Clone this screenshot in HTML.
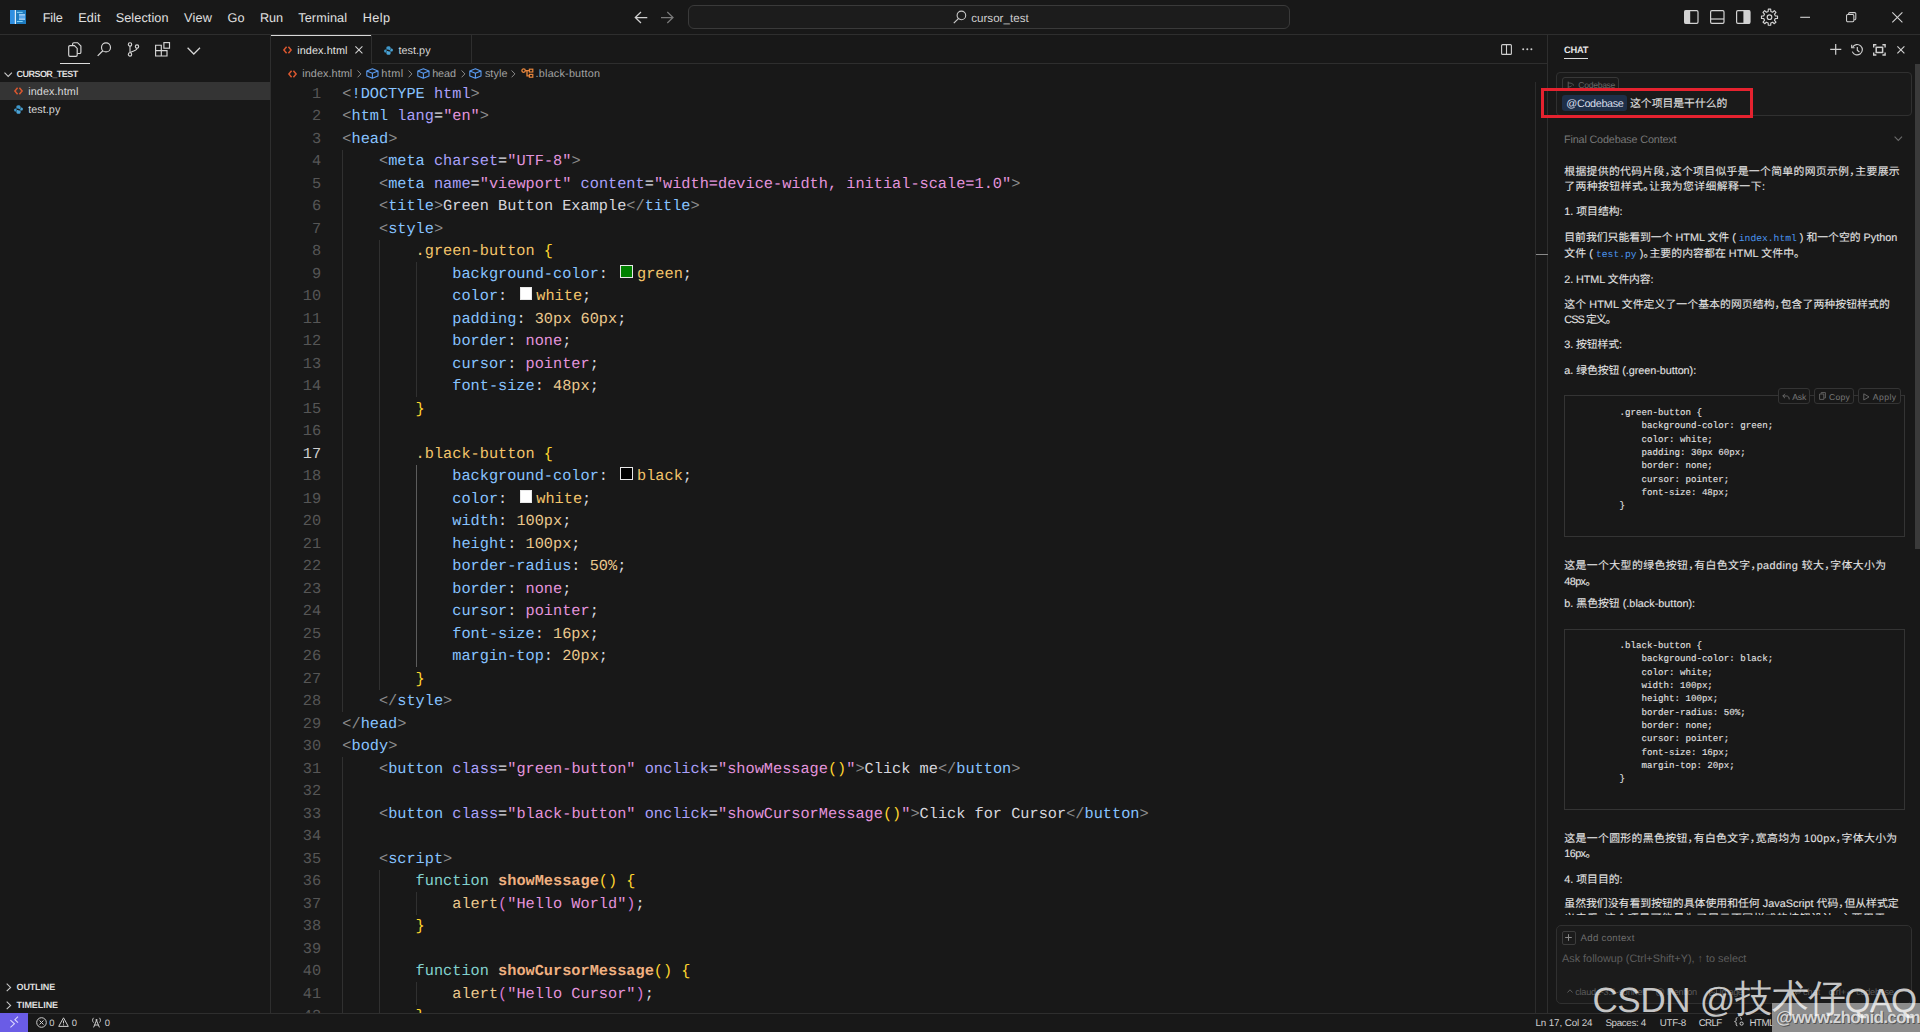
<!DOCTYPE html>
<html lang="en">
<head>
<meta charset="UTF-8">
<title>cursor_test</title>
<style>
*{box-sizing:border-box;margin:0;padding:0}
html,body{width:1920px;height:1032px;overflow:hidden;background:#181818}
body{position:relative;font-family:"Liberation Sans",sans-serif;color:#ccc;font-size:13px;text-rendering:geometricPrecision}
.tx{position:absolute;white-space:nowrap;display:block}
.bx{position:absolute}
svg{display:block;position:absolute;overflow:visible}
#code{position:absolute;left:0;top:0;width:1535px;height:1013px;overflow:hidden;font-family:"Liberation Mono",monospace;font-size:15.272px;line-height:22px;white-space:pre;color:#d6d6dd}
#code .ln{position:absolute;left:271px;width:50.2px;text-align:right;height:22px}
#code .cl{position:absolute;left:342.3px;height:22px}
#code b{font-weight:bold}
.sw{display:inline-block;width:12.8px;height:12.4px;margin:0 3.8px 0 3.3px;border:1px solid #e8e8e8;vertical-align:0.2px;box-sizing:border-box}
.cb{position:absolute;left:1575.5px;font-family:"Liberation Mono",monospace;font-size:9.17px;line-height:13.33px;height:13.33px;white-space:pre;color:#e2e2e2;-webkit-text-stroke:0.1px #e2e2e2}
.ic{font-family:"Liberation Mono",monospace;font-size:9.68px;color:#4a94ee;letter-spacing:0;-webkit-text-stroke:0}
.clip{position:absolute;overflow:hidden}
.pn{display:inline-block;width:0.56em;font-style:normal;overflow:visible}
</style>
</head>
<body>
<div class="bx" style="left:0px;top:34px;width:1920px;height:1px;background:#2e2e2e;"></div>
<div class="bx" style="left:270px;top:35px;width:1px;height:978px;background:#2e2e2e;"></div>
<div class="bx" style="left:1547px;top:35px;width:1px;height:978px;background:#2e2e2e;"></div>
<div class="bx" style="left:0px;top:1013px;width:1920px;height:1px;background:#2e2e2e;"></div>
<div class="bx" style="left:371px;top:63px;width:1177px;height:1px;background:#2e2e2e;"></div>
<svg style="left:10px;top:10px;" width="16" height="14" viewBox="0 0 16 14"><rect x="0" y="0" width="16" height="14" fill="#1f7cc0"/><rect x="0" y="0" width="4.8" height="14" fill="#2f8fe2"/><rect x="4.8" y="0" width="1.1" height="14" fill="#f4f8fc"/><rect x="6.9" y="1.9" width="5.8" height="0.9" fill="#8fdcff"/><rect x="9" y="4.4" width="6" height="5.2" fill="#5aa6ea"/><rect x="9" y="4.4" width="6" height="0.9" fill="#d6ecff"/><rect x="9" y="8.7" width="6" height="0.9" fill="#d6ecff"/><rect x="6.9" y="11" width="5.8" height="0.9" fill="#8fdcff"/></svg>
<span class="tx" id="f0" style="left:42.70px;top:9px;font-size:12.7px;line-height:18px;height:18px;color:#e0e0e0;letter-spacing:-0.088px;">File</span>
<span class="tx" id="f1" style="left:78.20px;top:9px;font-size:12.7px;line-height:18px;height:18px;color:#e0e0e0;letter-spacing:0.156px;">Edit</span>
<span class="tx" id="f2" style="left:115.70px;top:9px;font-size:12.7px;line-height:18px;height:18px;color:#e0e0e0;letter-spacing:0.077px;">Selection</span>
<span class="tx" id="f3" style="left:184.10px;top:9px;font-size:12.7px;line-height:18px;height:18px;color:#e0e0e0;letter-spacing:0.205px;">View</span>
<span class="tx" id="f4" style="left:227.50px;top:9px;font-size:12.7px;line-height:18px;height:18px;color:#e0e0e0;letter-spacing:0.031px;">Go</span>
<span class="tx" id="f5" style="left:259.90px;top:9px;font-size:12.7px;line-height:18px;height:18px;color:#e0e0e0;letter-spacing:-0.094px;">Run</span>
<span class="tx" id="f6" style="left:298.20px;top:9px;font-size:12.7px;line-height:18px;height:18px;color:#e0e0e0;letter-spacing:0.143px;">Terminal</span>
<span class="tx" id="f7" style="left:362.70px;top:9px;font-size:12.7px;line-height:18px;height:18px;color:#e0e0e0;letter-spacing:0.452px;">Help</span>
<svg style="left:634px;top:11px;" width="14" height="13" viewBox="0 0 14 13"><path d="M7 1 L1.3 6.5 L7 12 M1.3 6.5 H13.3" fill="none" stroke="#d0d0d0" stroke-width="1.25"/></svg>
<svg style="left:660px;top:11px;" width="14" height="13" viewBox="0 0 14 13"><path d="M7.3 1 L13 6.5 L7.3 12 M13 6.5 H1" fill="none" stroke="#7a7a7a" stroke-width="1.25"/></svg>
<div class="bx" style="left:688px;top:5px;width:602px;height:24px;background:#1c1c1c;border:1px solid #3a3a3a;border-radius:6px;"></div>
<svg style="left:953px;top:10px;" width="14" height="14" viewBox="0 0 14 14"><circle cx="8.4" cy="5.4" r="4.3" fill="none" stroke="#c8c8c8" stroke-width="1.1"/><path d="M5.4 8.6 L0.8 13.2" stroke="#c8c8c8" stroke-width="1.2"/></svg>
<span class="tx" id="f8" style="left:971.20px;top:10px;font-size:11.6px;line-height:17px;height:17px;color:#cfcfcf;letter-spacing:0.013px;">cursor_test</span>
<svg style="left:1684px;top:10px;" width="15" height="14" viewBox="0 0 15 14"><rect x="0.6" y="0.6" width="13.4" height="12.8" rx="1.3" fill="none" stroke="#d2d2d2" stroke-width="1.2"/><rect x="0.6" y="0.6" width="5.6" height="12.8" fill="#d2d2d2"/></svg>
<svg style="left:1710px;top:10px;" width="15" height="14" viewBox="0 0 15 14"><rect x="0.6" y="0.6" width="13.4" height="12.8" rx="1.3" fill="none" stroke="#d2d2d2" stroke-width="1.2"/><path d="M0.6 9 H14" stroke="#d2d2d2" stroke-width="1.2"/></svg>
<svg style="left:1736px;top:10px;" width="15" height="14" viewBox="0 0 15 14"><rect x="0.6" y="0.6" width="13.4" height="12.8" rx="1.3" fill="none" stroke="#d2d2d2" stroke-width="1.2"/><rect x="7.4" y="0.6" width="6.6" height="12.8" fill="#d2d2d2"/></svg>
<svg style="left:1760.5px;top:8.8px;" width="17" height="17" viewBox="0 0 17 17"><g transform="translate(8.5,8.2)"><polygon points="-1.33,-5.75 -1.20,-8.01 1.20,-8.01 1.33,-5.75 3.13,-5.00 4.82,-6.51 6.51,-4.82 5.00,-3.13 5.75,-1.33 8.01,-1.20 8.01,1.20 5.75,1.33 5.00,3.13 6.51,4.82 4.82,6.51 3.13,5.00 1.33,5.75 1.20,8.01 -1.20,8.01 -1.33,5.75 -3.13,5.00 -4.82,6.51 -6.51,4.82 -5.00,3.13 -5.75,1.33 -8.01,1.20 -8.01,-1.20 -5.75,-1.33 -5.00,-3.13 -6.51,-4.82 -4.82,-6.51 -3.13,-5.00" fill="none" stroke="#d2d2d2" stroke-width="1.15" stroke-linejoin="round"/><circle r="2.3" fill="none" stroke="#d2d2d2" stroke-width="1.15"/></g></svg>
<svg style="left:1800px;top:12px;" width="11" height="11" viewBox="0 0 11 11"><path d="M0.2 5.3 H10" stroke="#d2d2d2" stroke-width="1.1"/></svg>
<svg style="left:1845.8px;top:11.9px;" width="11" height="11" viewBox="0 0 11 11"><rect x="0.55" y="2.5" width="7.3" height="7.3" rx="1.2" fill="none" stroke="#d2d2d2" stroke-width="1.05"/><path d="M2.6 2.3 V1.8 A1.2 1.2 0 0 1 3.8 0.6 H8.6 A1.2 1.2 0 0 1 9.8 1.8 V6.6 A1.2 1.2 0 0 1 8.6 7.8 H8.1" fill="none" stroke="#d2d2d2" stroke-width="1.05"/></svg>
<svg style="left:1891.8px;top:11.9px;" width="11" height="11" viewBox="0 0 11 11"><path d="M0.3 0.3 L10.4 10.4 M10.4 0.3 L0.3 10.4" stroke="#d2d2d2" stroke-width="1.1"/></svg>
<svg style="left:68px;top:41.5px;" width="14" height="15" viewBox="0 0 14 15"><path d="M4.6 3.4 V2 A1.3 1.3 0 0 1 5.9 0.7 H9.6 L12.9 4 V10.2 A1.3 1.3 0 0 1 11.6 11.5 H9.2" fill="none" stroke="#d6d6d6" stroke-width="1.15"/><path d="M2 3.6 H6.4 L9.2 6.4 V13 A1.3 1.3 0 0 1 7.9 14.3 H2 A1.3 1.3 0 0 1 0.7 13 V4.9 A1.3 1.3 0 0 1 2 3.6 Z" fill="none" stroke="#d6d6d6" stroke-width="1.15"/></svg>
<div class="bx" style="left:60px;top:62.5px;width:30px;height:1.4px;background:#dcdcdc;"></div>
<svg style="left:97px;top:42px;" width="15" height="15" viewBox="0 0 15 15"><circle cx="9" cy="5.4" r="4.5" fill="none" stroke="#d6d6d6" stroke-width="1.15"/><path d="M5.8 8.8 L0.7 13.9" stroke="#d6d6d6" stroke-width="1.25"/></svg>
<svg style="left:127px;top:41.5px;" width="13" height="15" viewBox="0 0 13 15"><circle cx="3" cy="2.4" r="1.7" fill="none" stroke="#d6d6d6" stroke-width="1.1"/><circle cx="3" cy="12.4" r="1.7" fill="none" stroke="#d6d6d6" stroke-width="1.1"/><circle cx="10" cy="4.6" r="1.7" fill="none" stroke="#d6d6d6" stroke-width="1.1"/><path d="M3 4.1 V10.7 M10 6.3 C10 9 6 8.6 3.6 10.4" fill="none" stroke="#d6d6d6" stroke-width="1.1"/></svg>
<svg style="left:154.9px;top:41.8px;" width="16" height="15" viewBox="0 0 16 15"><path d="M0.6 3.2 H6.3 V8.6 H12 V14 H0.6 Z M0.6 8.6 H6.3 V14" fill="none" stroke="#d6d6d6" stroke-width="1.15"/><rect x="8.9" y="0.6" width="5.6" height="5.6" fill="none" stroke="#d6d6d6" stroke-width="1.15"/></svg>
<svg style="left:187px;top:46.5px;" width="14" height="8" viewBox="0 0 14 8"><path d="M0.6 0.8 L6.8 7 L13 0.8" fill="none" stroke="#d6d6d6" stroke-width="1.25"/></svg>
<svg style="left:4px;top:71.5px;" width="9" height="6" viewBox="0 0 9 6"><path d="M0.5 0.6 L4.2 4.4 L7.9 0.6" fill="none" stroke="#c8c8c8" stroke-width="1.1"/></svg>
<span class="tx" id="f9" style="left:16.60px;top:67px;font-size:9.0px;line-height:14px;height:14px;color:#dedede;font-weight:bold;letter-spacing:-0.547px;">CURSOR_TEST</span>
<div class="bx" style="left:0px;top:82px;width:270px;height:18px;background:#343434;"></div>
<svg style="left:14px;top:87.2px;" width="9" height="8" viewBox="0 0 9 8"><path d="M3.6 0.8 L0.9 4 L3.6 7.2 M5.4 0.8 L8.1 4 L5.4 7.2" fill="none" stroke="#d9572f" stroke-width="1.5"/></svg>
<span class="tx" id="f10" style="left:28.20px;top:84px;font-size:10.83px;line-height:16px;height:16px;color:#d8d8d8;letter-spacing:0.084px;">index.html</span>
<svg style="left:13.8px;top:104.6px;" width="9" height="9" viewBox="0 0 9 9"><path d="M4.4 0.2 C2.6 0.2 2.4 1 2.4 1.8 V2.9 H4.6 V3.4 H1.4 C0.4 3.4 0.1 4.4 0.1 5 C0.1 5.8 0.5 6.6 1.4 6.6 H2.3 V5.4 C2.3 4.6 3 4.1 3.7 4.1 H5.6 C6.2 4.1 6.6 3.6 6.6 3 V1.8 C6.6 0.8 5.8 0.2 4.4 0.2 Z" fill="#3f97c9"/><path d="M4.6 8.8 C6.4 8.8 6.6 8 6.6 7.2 V6.1 H4.4 V5.6 H7.6 C8.6 5.6 8.9 4.6 8.9 4 C8.9 3.2 8.5 2.4 7.6 2.4 H6.7 V3.6 C6.7 4.4 6 4.9 5.3 4.9 H3.4 C2.8 4.9 2.4 5.4 2.4 6 V7.2 C2.4 8.2 3.2 8.8 4.6 8.8 Z" fill="#4aa3d6"/></svg>
<span class="tx" id="f11" style="left:28.20px;top:102px;font-size:10.83px;line-height:16px;height:16px;color:#d8d8d8;letter-spacing:0.042px;">test.py</span>
<svg style="left:6px;top:982.6px;" width="6" height="9" viewBox="0 0 6 9"><path d="M0.7 0.6 L4.6 4.4 L0.7 8.2" fill="none" stroke="#c8c8c8" stroke-width="1.1"/></svg>
<span class="tx" id="f12" style="left:16.60px;top:980px;font-size:9.0px;line-height:14px;height:14px;color:#dedede;font-weight:bold;letter-spacing:-0.157px;">OUTLINE</span>
<svg style="left:6px;top:1000.6px;" width="6" height="9" viewBox="0 0 6 9"><path d="M0.7 0.6 L4.6 4.4 L0.7 8.2" fill="none" stroke="#c8c8c8" stroke-width="1.1"/></svg>
<span class="tx" id="f13" style="left:16.60px;top:998px;font-size:9.0px;line-height:14px;height:14px;color:#dedede;font-weight:bold;letter-spacing:-0.075px;">TIMELINE</span>
<div class="bx" style="left:271px;top:35px;width:100px;height:1px;background:#d8d8d8;"></div>
<div class="bx" style="left:371px;top:35px;width:1px;height:28px;background:#2e2e2e;"></div>
<div class="bx" style="left:471px;top:35px;width:1px;height:28px;background:#2e2e2e;"></div>
<svg style="left:283px;top:46.4px;" width="9" height="8" viewBox="0 0 9 8"><path d="M3.6 0.8 L0.9 4 L3.6 7.2 M5.4 0.8 L8.1 4 L5.4 7.2" fill="none" stroke="#d9572f" stroke-width="1.5"/></svg>
<span class="tx" id="f14" style="left:297.20px;top:43px;font-size:10.83px;line-height:16px;height:16px;color:#e2e2e2;letter-spacing:0.104px;">index.html</span>
<svg style="left:354.9px;top:46.2px;" width="8" height="8" viewBox="0 0 8 8"><path d="M0.4 0.4 L7.4 7.4 M7.4 0.4 L0.4 7.4" stroke="#d4d4d4" stroke-width="1.05"/></svg>
<svg style="left:384px;top:45.6px;" width="9" height="9" viewBox="0 0 9 9"><path d="M4.4 0.2 C2.6 0.2 2.4 1 2.4 1.8 V2.9 H4.6 V3.4 H1.4 C0.4 3.4 0.1 4.4 0.1 5 C0.1 5.8 0.5 6.6 1.4 6.6 H2.3 V5.4 C2.3 4.6 3 4.1 3.7 4.1 H5.6 C6.2 4.1 6.6 3.6 6.6 3 V1.8 C6.6 0.8 5.8 0.2 4.4 0.2 Z" fill="#3f97c9"/><path d="M4.6 8.8 C6.4 8.8 6.6 8 6.6 7.2 V6.1 H4.4 V5.6 H7.6 C8.6 5.6 8.9 4.6 8.9 4 C8.9 3.2 8.5 2.4 7.6 2.4 H6.7 V3.6 C6.7 4.4 6 4.9 5.3 4.9 H3.4 C2.8 4.9 2.4 5.4 2.4 6 V7.2 C2.4 8.2 3.2 8.8 4.6 8.8 Z" fill="#4aa3d6"/></svg>
<span class="tx" id="f15" style="left:398.40px;top:43px;font-size:10.83px;line-height:16px;height:16px;color:#d8d8d8;letter-spacing:0.042px;">test.py</span>
<svg style="left:1501px;top:43.6px;" width="11" height="11" viewBox="0 0 11 11"><rect x="0.6" y="0.6" width="9.8" height="9.8" rx="1" fill="none" stroke="#cfcfcf" stroke-width="1.1"/><path d="M5.5 0.6 V10.4" stroke="#cfcfcf" stroke-width="1.1"/></svg>
<svg style="left:1522.4px;top:48px;" width="11" height="3" viewBox="0 0 11 3"><circle cx="1.2" cy="1.2" r="1" fill="#cfcfcf"/><circle cx="5.3" cy="1.2" r="1" fill="#cfcfcf"/><circle cx="9.4" cy="1.2" r="1" fill="#cfcfcf"/></svg>
<svg style="left:288px;top:69.7px;" width="9" height="8" viewBox="0 0 9 8"><path d="M3.6 0.8 L0.9 4 L3.6 7.2 M5.4 0.8 L8.1 4 L5.4 7.2" fill="none" stroke="#d9572f" stroke-width="1.5"/></svg>
<span class="tx" id="f16" style="left:302.30px;top:66px;font-size:10.83px;line-height:16px;height:16px;color:#a2a2a2;letter-spacing:0.064px;">index.html</span>
<svg style="left:357.3px;top:70.1px;" width="5" height="8" viewBox="0 0 5 8"><path d="M0.6 0.5 L3.9 3.9 L0.6 7.3" fill="none" stroke="#8a8a8a" stroke-width="1"/></svg>
<svg style="left:365.5px;top:68.1px;" width="13" height="11" viewBox="0 0 13 11"><path d="M6.4 0.7 L12 2.9 V7.9 L6.4 10.3 L0.8 7.9 V2.9 Z M0.8 2.9 L6.4 5.2 L12 2.9 M6.4 5.2 V10.3" fill="none" stroke="#5a9bf0" stroke-width="1.1" stroke-linejoin="round"/></svg>
<span class="tx" id="f17" style="left:381.30px;top:66px;font-size:10.83px;line-height:16px;height:16px;color:#a2a2a2;letter-spacing:0.433px;">html</span>
<svg style="left:407.8px;top:70.1px;" width="5" height="8" viewBox="0 0 5 8"><path d="M0.6 0.5 L3.9 3.9 L0.6 7.3" fill="none" stroke="#8a8a8a" stroke-width="1"/></svg>
<svg style="left:416.6px;top:68.1px;" width="13" height="11" viewBox="0 0 13 11"><path d="M6.4 0.7 L12 2.9 V7.9 L6.4 10.3 L0.8 7.9 V2.9 Z M0.8 2.9 L6.4 5.2 L12 2.9 M6.4 5.2 V10.3" fill="none" stroke="#5a9bf0" stroke-width="1.1" stroke-linejoin="round"/></svg>
<span class="tx" id="f18" style="left:432.20px;top:66px;font-size:10.83px;line-height:16px;height:16px;color:#a2a2a2;letter-spacing:-0.123px;">head</span>
<svg style="left:460.8px;top:70.1px;" width="5" height="8" viewBox="0 0 5 8"><path d="M0.6 0.5 L3.9 3.9 L0.6 7.3" fill="none" stroke="#8a8a8a" stroke-width="1"/></svg>
<svg style="left:469.2px;top:68.1px;" width="13" height="11" viewBox="0 0 13 11"><path d="M6.4 0.7 L12 2.9 V7.9 L6.4 10.3 L0.8 7.9 V2.9 Z M0.8 2.9 L6.4 5.2 L12 2.9 M6.4 5.2 V10.3" fill="none" stroke="#5a9bf0" stroke-width="1.1" stroke-linejoin="round"/></svg>
<span class="tx" id="f19" style="left:484.90px;top:66px;font-size:10.83px;line-height:16px;height:16px;color:#a2a2a2;letter-spacing:0.067px;">style</span>
<svg style="left:511.4px;top:70.1px;" width="5" height="8" viewBox="0 0 5 8"><path d="M0.6 0.5 L3.9 3.9 L0.6 7.3" fill="none" stroke="#8a8a8a" stroke-width="1"/></svg>
<svg style="left:521px;top:68.1px;" width="13" height="11" viewBox="0 0 13 11"><circle cx="2.6" cy="2.6" r="1.7" fill="none" stroke="#e8863c" stroke-width="1.3"/><path d="M4.2 2.6 H8 M6 2.6 V7.8 H8" fill="none" stroke="#e8863c" stroke-width="1.3"/><rect x="8.4" y="1.2" width="3.4" height="2.8" fill="none" stroke="#e8863c" stroke-width="1.2"/><rect x="8.4" y="6.4" width="3.4" height="2.8" fill="none" stroke="#e8863c" stroke-width="1.2"/></svg>
<span class="tx" id="f20" style="left:535.60px;top:66px;font-size:10.83px;line-height:16px;height:16px;color:#a2a2a2;letter-spacing:0.200px;">.black-button</span>
<div class="bx" style="left:1535px;top:82px;width:1px;height:931px;background:#2c2c2c;"></div>
<div class="bx" style="left:1536px;top:254px;width:12px;height:1.4px;background:#8a8a8a;"></div>
<div class="bx" style="left:342.3px;top:149.5px;width:1px;height:562.5px;background:#303030;"></div>
<div class="bx" style="left:379.0px;top:239.5px;width:1px;height:450.0px;background:#303030;"></div>
<div class="bx" style="left:415.6px;top:262.0px;width:1px;height:135.0px;background:#303030;"></div>
<div class="bx" style="left:415.6px;top:464.5px;width:1px;height:202.5px;background:#5c5c5c;"></div>
<div class="bx" style="left:342.3px;top:757.0px;width:1px;height:256.0px;background:#303030;"></div>
<div class="bx" style="left:379.0px;top:869.5px;width:1px;height:143.5px;background:#303030;"></div>
<div class="bx" style="left:415.6px;top:892.0px;width:1px;height:22.5px;background:#303030;"></div>
<div class="bx" style="left:415.6px;top:982.0px;width:1px;height:22.5px;background:#303030;"></div>
<div id="code"><div class="ln" style="top:83px;color:#565656">1</div>
<div class="cl" style="top:83px"><span style="color:#8c8c8c">&lt;</span><span style="color:#87c3ff">!DOCTYPE</span> <span style="color:#aaa0fa">html</span><span style="color:#8c8c8c">&gt;</span></div>
<div class="ln" style="top:105px;color:#565656">2</div>
<div class="cl" style="top:105px"><span style="color:#8c8c8c">&lt;</span><span style="color:#87c3ff">html</span> <span style="color:#aaa0fa">lang</span>=<span style="color:#e394dc">"en"</span><span style="color:#8c8c8c">&gt;</span></div>
<div class="ln" style="top:128px;color:#565656">3</div>
<div class="cl" style="top:128px"><span style="color:#8c8c8c">&lt;</span><span style="color:#87c3ff">head</span><span style="color:#8c8c8c">&gt;</span></div>
<div class="ln" style="top:150px;color:#565656">4</div>
<div class="cl" style="top:150px">    <span style="color:#8c8c8c">&lt;</span><span style="color:#87c3ff">meta</span> <span style="color:#aaa0fa">charset</span>=<span style="color:#e394dc">"UTF-8"</span><span style="color:#8c8c8c">&gt;</span></div>
<div class="ln" style="top:173px;color:#565656">5</div>
<div class="cl" style="top:173px">    <span style="color:#8c8c8c">&lt;</span><span style="color:#87c3ff">meta</span> <span style="color:#aaa0fa">name</span>=<span style="color:#e394dc">"viewport"</span> <span style="color:#aaa0fa">content</span>=<span style="color:#e394dc">"width=device-width, initial-scale=1.0"</span><span style="color:#8c8c8c">&gt;</span></div>
<div class="ln" style="top:195px;color:#565656">6</div>
<div class="cl" style="top:195px">    <span style="color:#8c8c8c">&lt;</span><span style="color:#87c3ff">title</span><span style="color:#8c8c8c">&gt;</span>Green Button Example<span style="color:#8c8c8c">&lt;/</span><span style="color:#87c3ff">title</span><span style="color:#8c8c8c">&gt;</span></div>
<div class="ln" style="top:218px;color:#565656">7</div>
<div class="cl" style="top:218px">    <span style="color:#8c8c8c">&lt;</span><span style="color:#87c3ff">style</span><span style="color:#8c8c8c">&gt;</span></div>
<div class="ln" style="top:240px;color:#565656">8</div>
<div class="cl" style="top:240px">        <span style="color:#f3c46a">.green-button</span> <span style="color:#ffd52e">{</span></div>
<div class="ln" style="top:263px;color:#565656">9</div>
<div class="cl" style="top:263px">            <span style="color:#87c3ff">background-color</span>: <i class="sw" style="background:#008000"></i><span style="color:#f3c46a">green</span>;</div>
<div class="ln" style="top:285px;color:#565656">10</div>
<div class="cl" style="top:285px">            <span style="color:#87c3ff">color</span>: <i class="sw" style="background:#ffffff"></i><span style="color:#f3c46a">white</span>;</div>
<div class="ln" style="top:308px;color:#565656">11</div>
<div class="cl" style="top:308px">            <span style="color:#87c3ff">padding</span>: <span style="color:#ebc88d">30px</span> <span style="color:#ebc88d">60px</span>;</div>
<div class="ln" style="top:330px;color:#565656">12</div>
<div class="cl" style="top:330px">            <span style="color:#87c3ff">border</span>: <span style="color:#e394dc">none</span>;</div>
<div class="ln" style="top:353px;color:#565656">13</div>
<div class="cl" style="top:353px">            <span style="color:#87c3ff">cursor</span>: <span style="color:#e394dc">pointer</span>;</div>
<div class="ln" style="top:375px;color:#565656">14</div>
<div class="cl" style="top:375px">            <span style="color:#87c3ff">font-size</span>: <span style="color:#ebc88d">48px</span>;</div>
<div class="ln" style="top:398px;color:#565656">15</div>
<div class="cl" style="top:398px">        <span style="color:#ffd52e">}</span></div>
<div class="ln" style="top:420px;color:#565656">16</div>
<div class="ln" style="top:443px;color:#cfcfcf">17</div>
<div class="cl" style="top:443px">        <span style="color:#f3c46a">.black-button</span> <span style="color:#ffd52e">{</span></div>
<div class="ln" style="top:465px;color:#565656">18</div>
<div class="cl" style="top:465px">            <span style="color:#87c3ff">background-color</span>: <i class="sw" style="background:#000000"></i><span style="color:#f3c46a">black</span>;</div>
<div class="ln" style="top:488px;color:#565656">19</div>
<div class="cl" style="top:488px">            <span style="color:#87c3ff">color</span>: <i class="sw" style="background:#ffffff"></i><span style="color:#f3c46a">white</span>;</div>
<div class="ln" style="top:510px;color:#565656">20</div>
<div class="cl" style="top:510px">            <span style="color:#87c3ff">width</span>: <span style="color:#ebc88d">100px</span>;</div>
<div class="ln" style="top:533px;color:#565656">21</div>
<div class="cl" style="top:533px">            <span style="color:#87c3ff">height</span>: <span style="color:#ebc88d">100px</span>;</div>
<div class="ln" style="top:555px;color:#565656">22</div>
<div class="cl" style="top:555px">            <span style="color:#87c3ff">border-radius</span>: <span style="color:#ebc88d">50%</span>;</div>
<div class="ln" style="top:578px;color:#565656">23</div>
<div class="cl" style="top:578px">            <span style="color:#87c3ff">border</span>: <span style="color:#e394dc">none</span>;</div>
<div class="ln" style="top:600px;color:#565656">24</div>
<div class="cl" style="top:600px">            <span style="color:#87c3ff">cursor</span>: <span style="color:#e394dc">pointer</span>;</div>
<div class="ln" style="top:623px;color:#565656">25</div>
<div class="cl" style="top:623px">            <span style="color:#87c3ff">font-size</span>: <span style="color:#ebc88d">16px</span>;</div>
<div class="ln" style="top:645px;color:#565656">26</div>
<div class="cl" style="top:645px">            <span style="color:#87c3ff">margin-top</span>: <span style="color:#ebc88d">20px</span>;</div>
<div class="ln" style="top:668px;color:#565656">27</div>
<div class="cl" style="top:668px">        <span style="color:#ffd52e">}</span></div>
<div class="ln" style="top:690px;color:#565656">28</div>
<div class="cl" style="top:690px">    <span style="color:#8c8c8c">&lt;/</span><span style="color:#87c3ff">style</span><span style="color:#8c8c8c">&gt;</span></div>
<div class="ln" style="top:713px;color:#565656">29</div>
<div class="cl" style="top:713px"><span style="color:#8c8c8c">&lt;/</span><span style="color:#87c3ff">head</span><span style="color:#8c8c8c">&gt;</span></div>
<div class="ln" style="top:735px;color:#565656">30</div>
<div class="cl" style="top:735px"><span style="color:#8c8c8c">&lt;</span><span style="color:#87c3ff">body</span><span style="color:#8c8c8c">&gt;</span></div>
<div class="ln" style="top:758px;color:#565656">31</div>
<div class="cl" style="top:758px">    <span style="color:#8c8c8c">&lt;</span><span style="color:#87c3ff">button</span> <span style="color:#aaa0fa">class</span>=<span style="color:#e394dc">"green-button"</span> <span style="color:#aaa0fa">onclick</span>=<span style="color:#e394dc">"showMessage</span><span style="color:#ffd52e">()</span><span style="color:#e394dc">"</span><span style="color:#8c8c8c">&gt;</span>Click me<span style="color:#8c8c8c">&lt;/</span><span style="color:#87c3ff">button</span><span style="color:#8c8c8c">&gt;</span></div>
<div class="ln" style="top:780px;color:#565656">32</div>
<div class="ln" style="top:803px;color:#565656">33</div>
<div class="cl" style="top:803px">    <span style="color:#8c8c8c">&lt;</span><span style="color:#87c3ff">button</span> <span style="color:#aaa0fa">class</span>=<span style="color:#e394dc">"black-button"</span> <span style="color:#aaa0fa">onclick</span>=<span style="color:#e394dc">"showCursorMessage</span><span style="color:#ffd52e">()</span><span style="color:#e394dc">"</span><span style="color:#8c8c8c">&gt;</span>Click for Cursor<span style="color:#8c8c8c">&lt;/</span><span style="color:#87c3ff">button</span><span style="color:#8c8c8c">&gt;</span></div>
<div class="ln" style="top:825px;color:#565656">34</div>
<div class="ln" style="top:848px;color:#565656">35</div>
<div class="cl" style="top:848px">    <span style="color:#8c8c8c">&lt;</span><span style="color:#87c3ff">script</span><span style="color:#8c8c8c">&gt;</span></div>
<div class="ln" style="top:870px;color:#565656">36</div>
<div class="cl" style="top:870px">        <span style="color:#82d2ce">function</span> <b style="color:#efb080">showMessage</b><span style="color:#ffd52e">()</span> <span style="color:#ffd52e">{</span></div>
<div class="ln" style="top:893px;color:#565656">37</div>
<div class="cl" style="top:893px">            <span style="color:#ebc88d">alert</span><span style="color:#d879d6">(</span><span style="color:#e394dc">"Hello World"</span><span style="color:#d879d6">)</span>;</div>
<div class="ln" style="top:915px;color:#565656">38</div>
<div class="cl" style="top:915px">        <span style="color:#ffd52e">}</span></div>
<div class="ln" style="top:938px;color:#565656">39</div>
<div class="ln" style="top:960px;color:#565656">40</div>
<div class="cl" style="top:960px">        <span style="color:#82d2ce">function</span> <b style="color:#efb080">showCursorMessage</b><span style="color:#ffd52e">()</span> <span style="color:#ffd52e">{</span></div>
<div class="ln" style="top:983px;color:#565656">41</div>
<div class="cl" style="top:983px">            <span style="color:#ebc88d">alert</span><span style="color:#d879d6">(</span><span style="color:#e394dc">"Hello Cursor"</span><span style="color:#d879d6">)</span>;</div>
<div class="ln" style="top:1005px;color:#565656">42</div>
<div class="cl" style="top:1005px">        <span style="color:#ffd52e">}</span></div></div>
<span class="tx" id="f21" style="left:1564.00px;top:43px;font-size:9.3px;line-height:14px;height:14px;color:#e4e4e4;font-weight:bold;letter-spacing:-0.235px;">CHAT</span>
<div class="bx" style="left:1564px;top:57.8px;width:24px;height:1.3px;background:#dcdcdc;"></div>
<svg style="left:1829.8px;top:44px;" width="12" height="11" viewBox="0 0 12 11"><path d="M5.7 0 V10.8 M0.2 5.4 H11.3" stroke="#d0d0d0" stroke-width="1.2"/></svg>
<svg style="left:1851px;top:43.5px;" width="13" height="12" viewBox="0 0 13 12"><path d="M1.6 3.2 A5.2 5.2 0 1 1 1.3 7.6" fill="none" stroke="#d0d0d0" stroke-width="1.15"/><path d="M0.7 0.8 V3.7 H3.6" fill="none" stroke="#d0d0d0" stroke-width="1.15"/><path d="M6.3 3 V6.3 L8.4 8" fill="none" stroke="#d0d0d0" stroke-width="1.15"/></svg>
<svg style="left:1872.5px;top:43.6px;" width="13" height="12" viewBox="0 0 13 12"><rect x="3.2" y="3.3" width="6.4" height="5.2" fill="none" stroke="#d0d0d0" stroke-width="1.5"/><path d="M0.7 3.4 V0.8 H3.4 M9.4 0.8 H12.1 V3.4 M12.1 8.4 V11 H9.4 M3.4 11 H0.7 V8.4" fill="none" stroke="#d0d0d0" stroke-width="1.4"/></svg>
<svg style="left:1896.7px;top:46px;" width="8" height="8" viewBox="0 0 8 8"><path d="M0.4 0.4 L7.4 7.4 M7.4 0.4 L0.4 7.4" stroke="#d0d0d0" stroke-width="1.15"/></svg>
<div class="bx" style="left:1915px;top:64px;width:5px;height:485px;background:#3a3a3a;"></div>
<div class="bx" style="left:1556px;top:71.5px;width:356px;height:44px;background:#1a1a1a;border:1px solid #303030;border-radius:4px;"></div>
<div class="bx" style="left:1562px;top:77px;width:57px;height:14px;border:1px solid #383838;border-radius:3px;"></div>
<svg style="left:1567px;top:80.5px;" width="8" height="9" viewBox="0 0 8 9"><path d="M1.2 0.6 V8.4 M1.2 2 C5 2 6.4 3 6.4 4.6 M1.2 6 C3 6 4 5.4 4.6 4.8" fill="none" stroke="#5c5c5c" stroke-width="1"/></svg>
<span class="tx" id="f22" style="left:1578.30px;top:78px;font-size:8.6px;line-height:14px;height:14px;color:#666;letter-spacing:-0.298px;">Codebase</span>
<div class="bx" style="left:1562.2px;top:94.8px;width:64.4px;height:16px;background:#1e2f48;border-radius:3px;"></div>
<span class="tx" id="f23" style="left:1566.30px;top:96px;font-size:10.83px;line-height:16px;height:16px;color:#d6dde8;letter-spacing:-0.351px;">@Codebase</span>
<span class="tx" lang="zh-CN" id="f24" style="left:1630.00px;top:96px;font-size:10.83px;line-height:16px;height:16px;color:#e0e0e0;-webkit-text-stroke:0.1px #e0e0e0;letter-spacing:-0.006px;">这个项目是干什么的</span>
<div class="bx" style="left:1541.2px;top:87.8px;width:212px;height:30.4px;border:3.6px solid #e5222f;"></div>
<span class="tx" id="f25" style="left:1564.00px;top:132px;font-size:10.83px;line-height:16px;height:16px;color:#777;letter-spacing:-0.171px;">Final Codebase Context</span>
<svg style="left:1893.6px;top:135.6px;" width="9" height="6" viewBox="0 0 9 6"><path d="M0.6 0.6 L4.3 4.4 L8 0.6" fill="none" stroke="#6a6a6a" stroke-width="1.1"/></svg>
<span class="tx" lang="zh-CN" id="f26" style="left:1564.30px;top:164px;font-size:10.83px;line-height:16px;height:16px;color:#e2e2e2;-webkit-text-stroke:0.1px #e2e2e2;letter-spacing:0.328px;">根据提供的代码片段<i class="pn">，</i>这个项目似乎是一个简单的网页示例<i class="pn">，</i>主要展示</span>
<span class="tx" lang="zh-CN" id="f27" style="left:1564.30px;top:179px;font-size:10.83px;line-height:16px;height:16px;color:#e2e2e2;-webkit-text-stroke:0.1px #e2e2e2;letter-spacing:0.439px;">了两种按钮样式<i class="pn">。</i>让我为您详细解释一下:</span>
<span class="tx" lang="zh-CN" id="f28" style="left:1564.30px;top:204px;font-size:10.83px;line-height:16px;height:16px;color:#e2e2e2;-webkit-text-stroke:0.1px #e2e2e2;letter-spacing:-0.022px;">1. 项目结构:</span>
<span class="tx" lang="zh-CN" id="f29" style="left:1564.30px;top:230px;font-size:10.83px;line-height:16px;height:16px;color:#e2e2e2;-webkit-text-stroke:0.1px #e2e2e2;letter-spacing:-0.008px;">目前我们只能看到一个 HTML 文件 ( <code class="ic">index.html</code> ) 和一个空的 Python</span>
<span class="tx" lang="zh-CN" id="f30" style="left:1564.30px;top:246px;font-size:10.83px;line-height:16px;height:16px;color:#e2e2e2;-webkit-text-stroke:0.1px #e2e2e2;letter-spacing:0.077px;">文件 ( <code class="ic">test.py</code> )<i class="pn">。</i>主要的内容都在 HTML 文件中<i class="pn">。</i></span>
<span class="tx" lang="zh-CN" id="f31" style="left:1564.30px;top:272px;font-size:10.83px;line-height:16px;height:16px;color:#e2e2e2;-webkit-text-stroke:0.1px #e2e2e2;letter-spacing:-0.096px;">2. HTML 文件内容:</span>
<span class="tx" lang="zh-CN" id="f32" style="left:1564.30px;top:297px;font-size:10.83px;line-height:16px;height:16px;color:#e2e2e2;-webkit-text-stroke:0.1px #e2e2e2;letter-spacing:0.088px;">这个 HTML 文件定义了一个基本的网页结构<i class="pn">，</i>包含了两种按钮样式的</span>
<span class="tx" lang="zh-CN" id="f33" style="left:1564.30px;top:312px;font-size:10.83px;line-height:16px;height:16px;color:#e2e2e2;-webkit-text-stroke:0.1px #e2e2e2;letter-spacing:-0.914px;">CSS 定义<i class="pn">。</i></span>
<span class="tx" lang="zh-CN" id="f34" style="left:1564.30px;top:337px;font-size:10.83px;line-height:16px;height:16px;color:#e2e2e2;-webkit-text-stroke:0.1px #e2e2e2;letter-spacing:-0.097px;">3. 按钮样式:</span>
<span class="tx" lang="zh-CN" id="f35" style="left:1564.30px;top:363px;font-size:10.83px;line-height:16px;height:16px;color:#e2e2e2;-webkit-text-stroke:0.1px #e2e2e2;letter-spacing:-0.050px;">a. 绿色按钮 (.green-button):</span>
<div class="bx" style="left:1564px;top:395.2px;width:341px;height:141.4px;background:#181818;border:1px solid #343434;"></div>
<div class="cb" style="top:405px;line-height:15px;height:15px">        .green-button {</div><div class="cb" style="top:418px;line-height:15px;height:15px">            background-color: green;</div><div class="cb" style="top:432px;line-height:15px;height:15px">            color: white;</div><div class="cb" style="top:445px;line-height:15px;height:15px">            padding: 30px 60px;</div><div class="cb" style="top:458px;line-height:15px;height:15px">            border: none;</div><div class="cb" style="top:472px;line-height:15px;height:15px">            cursor: pointer;</div><div class="cb" style="top:485px;line-height:15px;height:15px">            font-size: 48px;</div><div class="cb" style="top:498px;line-height:15px;height:15px">        }</div>
<div class="bx" style="left:1777.5px;top:388px;width:32.6px;height:15.6px;background:#181818;border:1px solid #343434;border-radius:3px;"></div>
<span class="tx" id="f36" style="left:1792.30px;top:390px;font-size:8.6px;line-height:14px;height:14px;color:#777;letter-spacing:-0.176px;">Ask</span>
<div class="bx" style="left:1814.2px;top:388px;width:40px;height:15.6px;background:#181818;border:1px solid #343434;border-radius:3px;"></div>
<span class="tx" id="f37" style="left:1829.00px;top:390px;font-size:8.6px;line-height:14px;height:14px;color:#777;letter-spacing:0.234px;">Copy</span>
<div class="bx" style="left:1857.8px;top:388px;width:43px;height:15.6px;background:#181818;border:1px solid #343434;border-radius:3px;"></div>
<span class="tx" id="f38" style="left:1872.80px;top:390px;font-size:8.6px;line-height:14px;height:14px;color:#777;letter-spacing:0.460px;">Apply</span>
<svg style="left:1782px;top:393px;" width="8" height="7" viewBox="0 0 8 7"><path d="M3 0.8 L0.8 3 L3 5.2 M0.8 3 H4.6 C6.4 3 7.2 4.2 7.2 6.4" fill="none" stroke="#666" stroke-width="1"/></svg>
<svg style="left:1819px;top:392.4px;" width="7" height="8" viewBox="0 0 7 8"><path d="M2.2 1.6 V0.6 H6.4 V6 H5.2 M0.6 2 H4.8 V7.4 H0.6 Z" fill="none" stroke="#666" stroke-width="0.9"/></svg>
<svg style="left:1862.6px;top:392.6px;" width="7" height="8" viewBox="0 0 7 8"><path d="M0.8 0.8 L6 3.9 L0.8 7 Z" fill="none" stroke="#666" stroke-width="1"/></svg>
<span class="tx" lang="zh-CN" id="f39" style="left:1564.30px;top:558px;font-size:10.83px;line-height:16px;height:16px;color:#e2e2e2;-webkit-text-stroke:0.1px #e2e2e2;letter-spacing:0.436px;">这是一个大型的绿色按钮<i class="pn">，</i>有白色文字<i class="pn">，</i>padding 较大<i class="pn">，</i>字体大小为</span>
<span class="tx" lang="zh-CN" id="f40" style="left:1564.30px;top:574px;font-size:10.83px;line-height:16px;height:16px;color:#e2e2e2;-webkit-text-stroke:0.1px #e2e2e2;letter-spacing:-0.589px;">48px<i class="pn">。</i></span>
<span class="tx" lang="zh-CN" id="f41" style="left:1564.30px;top:596px;font-size:10.83px;line-height:16px;height:16px;color:#e2e2e2;-webkit-text-stroke:0.1px #e2e2e2;letter-spacing:0.009px;">b. 黑色按钮 (.black-button):</span>
<div class="bx" style="left:1564px;top:629.2px;width:341px;height:181px;background:#181818;border:1px solid #343434;"></div>
<div class="cb" style="top:638px;line-height:15px;height:15px">        .black-button {</div><div class="cb" style="top:651px;line-height:15px;height:15px">            background-color: black;</div><div class="cb" style="top:665px;line-height:15px;height:15px">            color: white;</div><div class="cb" style="top:678px;line-height:15px;height:15px">            width: 100px;</div><div class="cb" style="top:691px;line-height:15px;height:15px">            height: 100px;</div><div class="cb" style="top:705px;line-height:15px;height:15px">            border-radius: 50%;</div><div class="cb" style="top:718px;line-height:15px;height:15px">            border: none;</div><div class="cb" style="top:731px;line-height:15px;height:15px">            cursor: pointer;</div><div class="cb" style="top:745px;line-height:15px;height:15px">            font-size: 16px;</div><div class="cb" style="top:758px;line-height:15px;height:15px">            margin-top: 20px;</div><div class="cb" style="top:771px;line-height:15px;height:15px">        }</div>
<span class="tx" lang="zh-CN" id="f42" style="left:1564.30px;top:831px;font-size:10.83px;line-height:16px;height:16px;color:#e2e2e2;-webkit-text-stroke:0.1px #e2e2e2;letter-spacing:0.382px;">这是一个圆形的黑色按钮<i class="pn">，</i>有白色文字<i class="pn">，</i>宽高均为 100px<i class="pn">，</i>字体大小为</span>
<span class="tx" lang="zh-CN" id="f43" style="left:1564.30px;top:846px;font-size:10.83px;line-height:16px;height:16px;color:#e2e2e2;-webkit-text-stroke:0.1px #e2e2e2;letter-spacing:-0.589px;">16px<i class="pn">。</i></span>
<span class="tx" lang="zh-CN" id="f44" style="left:1564.30px;top:872px;font-size:10.83px;line-height:16px;height:16px;color:#e2e2e2;-webkit-text-stroke:0.1px #e2e2e2;letter-spacing:-0.022px;">4. 项目目的:</span>
<span class="tx" lang="zh-CN" id="f45" style="left:1564.30px;top:896px;font-size:10.83px;line-height:16px;height:16px;color:#e2e2e2;-webkit-text-stroke:0.1px #e2e2e2;letter-spacing:0.028px;">虽然我们没有看到按钮的具体使用和任何 JavaScript 代码<i class="pn">，</i>但从样式定</span>
<div class="clip" style="left:1560px;top:905px;width:350px;height:9.6px"><span class="tx" lang="zh-CN" id="f46" style="left:4.30px;top:6px;font-size:10.83px;line-height:16px;height:16px;color:#e2e2e2;-webkit-text-stroke:0.1px #e2e2e2;letter-spacing:0.638px;">义来看<i class="pn">，</i>这个项目可能是为了展示不同样式的按钮设计<i class="pn">，</i>主要用于</span></div>
<div class="bx" style="left:1556px;top:924.8px;width:356px;height:79.6px;background:#1b1b1b;border:1px solid #303030;border-radius:5px;"></div>
<div class="bx" style="left:1562px;top:931px;width:14px;height:13.6px;border:1px solid #3c3c3c;border-radius:2px;"></div>
<svg style="left:1565.4px;top:934.4px;" width="7" height="7" viewBox="0 0 7 7"><path d="M3.5 0.2 V6.8 M0.2 3.5 H6.8" stroke="#8a8a8a" stroke-width="1"/></svg>
<span class="tx" id="f47" style="left:1580.60px;top:931px;font-size:9.6px;line-height:15px;height:15px;color:#6e6e6e;letter-spacing:0.303px;">Add context</span>
<span class="tx" id="f48" style="left:1562.00px;top:951px;font-size:10.83px;line-height:16px;height:16px;color:#5e5e5e;letter-spacing:0.006px;">Ask followup (Ctrl+Shift+Y), ↑ to select</span>
<svg style="left:1566.6px;top:989.4px;" width="6" height="4" viewBox="0 0 6 4"><path d="M0.5 3.5 L3 0.8 L5.5 3.5" fill="none" stroke="#5a5a5a" stroke-width="1"/></svg>
<span class="tx" id="f49" style="left:1575.20px;top:985px;font-size:9.2px;line-height:14px;height:14px;color:#5a5a5a;letter-spacing:-0.245px;">claude-3.5-sonnet</span>
<span class="tx" id="f50" style="left:1655.40px;top:985px;font-size:9.2px;line-height:14px;height:14px;color:#5a5a5a;letter-spacing:-0.353px;">@ Mention</span>
<svg style="left:1708.6px;top:988.2px;" width="8" height="8" viewBox="0 0 8 8"><rect x="0.5" y="0.5" width="7" height="7" rx="1" fill="none" stroke="#5a5a5a" stroke-width="0.9"/><path d="M0.8 6 L3 3.6 L4.6 5.2 L5.6 4.4 L7.2 6" fill="none" stroke="#5a5a5a" stroke-width="0.8"/></svg>
<span class="tx" id="f51" style="left:1719.40px;top:985px;font-size:9.2px;line-height:14px;height:14px;color:#5a5a5a;letter-spacing:-0.509px;">Image</span>
<svg style="left:1794.4px;top:988.6px;" width="7" height="7" viewBox="0 0 7 7"><path d="M6.2 0.6 V4 H1.2 M3 2.2 L1.2 4 L3 5.8" fill="none" stroke="#5a5a5a" stroke-width="0.9"/></svg>
<span class="tx" id="f52" style="left:1803.00px;top:985px;font-size:9.2px;line-height:14px;height:14px;color:#5a5a5a;letter-spacing:0.006px;">chat</span>
<span class="tx" id="f53" style="left:1828.50px;top:985px;font-size:9.2px;line-height:14px;height:14px;color:#5a5a5a;letter-spacing:-0.005px;">ctrl+</span>
<svg style="left:1846.4px;top:988.6px;" width="7" height="7" viewBox="0 0 7 7"><path d="M6.2 0.6 V4 H1.2 M3 2.2 L1.2 4 L3 5.8" fill="none" stroke="#5a5a5a" stroke-width="0.9"/></svg>
<span class="tx" id="f54" style="left:1856.20px;top:985px;font-size:9.2px;line-height:14px;height:14px;color:#5a5a5a;letter-spacing:-0.307px;">codebase</span>
<div class="bx" style="left:0px;top:1013.4px;width:28px;height:18.6px;background:#6a5ce6;"></div>
<svg style="left:10px;top:1016px;" width="9" height="12" viewBox="0 0 9 12"><path d="M0.4 4.2 L4.4 7.8 L0.4 11.4 M8 0.7 L4.9 3.7 L8 6.7" fill="none" stroke="#dcd8ff" stroke-width="1.1"/></svg>
<svg style="left:35.6px;top:1016.6px;" width="11" height="11" viewBox="0 0 11 11"><circle cx="5.5" cy="5.5" r="4.8" fill="none" stroke="#cfcfcf" stroke-width="1"/><path d="M3.5 3.5 L7.5 7.5 M7.5 3.5 L3.5 7.5" stroke="#cfcfcf" stroke-width="1"/></svg>
<span class="tx" id="f55" style="left:49.20px;top:1015px;font-size:9.4px;line-height:15px;height:15px;color:#cfcfcf;">0</span>
<svg style="left:58px;top:1016.8px;" width="11" height="10" viewBox="0 0 11 10"><path d="M5.5 0.8 L10.3 9.4 H0.7 Z" fill="none" stroke="#cfcfcf" stroke-width="1" stroke-linejoin="round"/><path d="M5.5 3.6 V6.4 M5.5 7.4 V8.4" stroke="#cfcfcf" stroke-width="1"/></svg>
<span class="tx" id="f56" style="left:71.80px;top:1015px;font-size:9.4px;line-height:15px;height:15px;color:#cfcfcf;">0</span>
<svg style="left:91.4px;top:1016.6px;" width="11" height="11" viewBox="0 0 11 11"><path d="M5.5 3.4 L2.6 10.4 M5.5 3.4 L8.4 10.4 M3.6 8 H7.4" fill="none" stroke="#cfcfcf" stroke-width="1"/><circle cx="5.5" cy="3" r="1" fill="#cfcfcf"/><path d="M2.6 0.8 C1.2 2.2 1.2 4.2 2.6 5.6 M8.4 0.8 C9.8 2.2 9.8 4.2 8.4 5.6" fill="none" stroke="#cfcfcf" stroke-width="0.9"/><path d="M0.6 0.4 L10.4 10.6" stroke="#181818" stroke-width="0"/></svg>
<span class="tx" id="f57" style="left:104.80px;top:1015px;font-size:9.4px;line-height:15px;height:15px;color:#cfcfcf;">0</span>
<span class="tx" id="f58" style="left:1535.40px;top:1016px;font-size:9.8px;line-height:15px;height:15px;color:#cfcfcf;letter-spacing:-0.099px;">Ln 17, Col 24</span>
<span class="tx" id="f59" style="left:1605.40px;top:1016px;font-size:9.8px;line-height:15px;height:15px;color:#cfcfcf;letter-spacing:-0.353px;">Spaces: 4</span>
<span class="tx" id="f60" style="left:1659.80px;top:1016px;font-size:9.8px;line-height:15px;height:15px;color:#cfcfcf;letter-spacing:-0.353px;">UTF-8</span>
<span class="tx" id="f61" style="left:1698.80px;top:1016px;font-size:9.8px;line-height:15px;height:15px;color:#cfcfcf;letter-spacing:-0.748px;">CRLF</span>
<span class="tx" id="f62" style="left:1749.40px;top:1016px;font-size:9.8px;line-height:15px;height:15px;color:#cfcfcf;letter-spacing:-0.518px;">HTML</span>
<svg style="left:1734px;top:1017.4px;" width="10" height="10" viewBox="0 0 10 10"><path d="M3.4 0.6 C1.8 0.6 2.2 2 2.2 3 C2.2 4 1.4 4.4 0.6 4.6 C1.4 4.8 2.2 5.2 2.2 6.2 C2.2 7.4 1.8 8.8 3.4 8.8 M6 0.6 C7.6 0.6 7.2 2 7.2 3" fill="none" stroke="#cfcfcf" stroke-width="1"/><circle cx="7.6" cy="6.6" r="1.6" fill="none" stroke="#cfcfcf" stroke-width="1"/></svg>
<div class="bx" style="left:1772px;top:1002.6px;width:148px;height:29.4px;background:rgba(150,150,150,0.93);"></div>
<span class="tx" id="f63" style="left:1776.00px;top:1006px;font-size:17px;line-height:23px;height:23px;color:#d6d6d6;font-weight:bold;letter-spacing:-0.719px;text-shadow:1px 1px 0 #555,-1px 0 0 #777;">@www.zhonid.com</span>
<span class="tx" id="f64" style="left:1592.40px;top:979px;font-size:35px;line-height:43px;height:43px;color:rgba(255,255,255,0.76);letter-spacing:-0.306px;">CSDN @</span>
<span class="tx" id="f65" style="left:1735.00px;top:975px;font-size:37.6px;line-height:46px;height:46px;color:rgba(255,255,255,0.76);letter-spacing:-0.911px;">技术仔</span>
<span class="tx" id="f66" style="left:1844.60px;top:981px;font-size:33.5px;line-height:41px;height:41px;color:rgba(255,255,255,0.76);letter-spacing:-1.023px;">QAQ</span>
</body>
</html>
